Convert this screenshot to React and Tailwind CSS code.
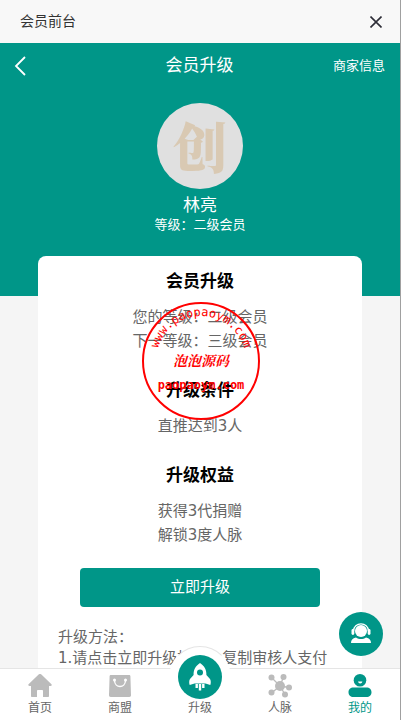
import React from "react";

const HomeIcon = () => (
  <svg viewBox="0 0 24 24" className="w-6 h-6" fill="currentColor">
    <path d="M10.6.6a2 2 0 0 1 2.8 0L23.200 10c1 1 .6 2-.6 2H21v9.900c0 .7-.4 1.100-1.100 1.100H15v-6.200c0-.5-.3-.8-.8-.8H9.800c-.5 0-.8.3-.8.8V23H4.100C3.400 23 3 22.600 3 21.900V12H1.400C.2 12-.2 11 .8 10z" />
  </svg>
);

const BagIcon = () => (
  <svg viewBox="0 0 24 24" className="w-6 h-6">
    <path d="M3 1h18c.9 0 1.300.5 1.400 1.400l.6 18.900c0 1.100-.6 1.700-1.700 1.700H2.700C1.600 23 1 22.400 1 21.300l.6-18.900C1.700 1.500 2.100 1 3 1z" fill="currentColor" />
    <path d="M6.500 6.500c.3 8 10.700 8 11 0" fill="none" stroke="#fff" strokeWidth="1.300" />
    <circle cx="6.500" cy="6" r="1.500" fill="#fff" />
    <circle cx="17.500" cy="6" r="1.500" fill="#fff" />
  </svg>
);

const NetworkIcon = () => (
  <svg viewBox="0 0 24 24" className="w-6 h-6" fill="currentColor" stroke="currentColor">
    <path d="M3.500 3.500 12 12M15.500 3 12 12M21 13.500 12 12M3.500 19 12 12M17 20.500 12 12" strokeWidth="1.300" />
    <g stroke="none">
      <circle cx="12" cy="12" r="5" />
      <circle cx="3.500" cy="3.500" r="3" />
      <circle cx="15.500" cy="3" r="3" />
      <circle cx="21" cy="13.500" r="3" />
      <circle cx="3.500" cy="18.500" r="3" />
      <circle cx="17" cy="20.500" r="3" />
    </g>
  </svg>
);

const UserIcon = () => (
  <svg viewBox="0 0 24 24" className="w-6 h-6" fill="currentColor">
    <circle cx="12" cy="6.300" r="6.300" />
    <path d="M5.500 13.500h13c3 0 5 2 5 4.700s-2 4.800-5 4.800h-13c-3 0-5-2.100-5-4.800s2-4.700 5-4.700z" />
    <path d="M10 7.500h4.400c-.4 2.600-4 2.600-4.400 0z" fill="#fff" />
  </svg>
);

const RocketIcon = () => (
  <svg viewBox="0 0 24 30" className="w-6 h-[30px]" fill="#fff">
    <path d="M12 1c4.600 3 6.600 7 6.400 12l3.600 4c1 1.200 1 4.500.3 6L17.500 21.500h-11L1.700 23c-.7-1.500-.7-4.800.3-6l3.600-4C5.400 8 7.400 4 12 1z" />
    <path d="M7.500 22h2.400v4H7.500zM10.800 22h2.400v6.500h-2.400zM14.100 22h2.400v4h-2.400z" />
    <circle cx="12" cy="10.500" r="3" fill="#009688" />
  </svg>
);

const ServiceIcon = () => (
  <svg viewBox="0 0 24 24" className="w-6 h-6" fill="#fff">
    <path d="M4.500 9C4.500-.5 19.500-.5 19.500 9" fill="none" stroke="#fff" strokeWidth="1.300" />
    <circle cx="12" cy="9" r="6" />
    <rect x="2.500" y="7" width="2.800" height="6" rx="1.400" />
    <rect x="18.700" y="7" width="2.800" height="6" rx="1.400" />
    <path d="M2 21c0-3 1.500-4.800 5-5.500 3 2 7 2 10 0 3.500.7 5 2.500 5 5.500z" />
  </svg>
);

const Stamp = () => (
  <svg
    viewBox="0 0 122 120"
    className="pointer-events-none absolute top-[45px] left-1/2 w-[122px] h-[120px] -translate-x-1/2"
    fill="#f00"
  >
    <defs>
      <path id="stamp-arc" d="M17 60a45 45 0 0 1 90 0" />
    </defs>
    <circle cx="62" cy="60" r="58" fill="none" stroke="#f00" strokeWidth="2" />
    <text className="font-['DejaVu_Sans_Mono',monospace] text-[12px]">
      <textPath href="#stamp-arc" startOffset="50%" textAnchor="middle">
        www.paopaoym.com
      </textPath>
    </text>
    <text x="62" y="65" textAnchor="middle" className="font-['Noto_Serif_CJK_SC','Noto_Sans_CJK_SC',serif] text-[14px] font-bold italic">
      泡泡源码
    </text>
    <text x="62" y="88" textAnchor="middle" className="font-['DejaVu_Sans_Mono',monospace] text-[12px] font-bold">
      paopaoym.com
    </text>
  </svg>
);

const sections = [
  { title: "会员升级", lines: ["您的等级：二级会员", "下一等级：三级会员"] },
  { title: "升级条件", lines: ["直推达到3人"] },
  { title: "升级权益", lines: ["获得3代捐赠", "解锁3度人脉"] },
];

const tabs = [
  { label: "首页", icon: <HomeIcon /> },
  { label: "商盟", icon: <BagIcon /> },
  { label: "升级", raised: true },
  { label: "人脉", icon: <NetworkIcon /> },
  { label: "我的", icon: <UserIcon />, active: true },
];

const App = () => {
  return (
    <div className="flex h-screen flex-col overflow-hidden border-r border-[#a0a0a0] bg-[#f5f5f5] font-['DejaVu_Sans','Noto_Sans_CJK_SC',sans-serif]">
      <div className="flex h-[43px] shrink-0 items-center justify-between bg-[#f8f8f8] pl-5 pr-[18px]">
        <span className="text-[14px] text-[#333]">会员前台</span>
        <button type="button" aria-label="关闭" className="text-[#2d2d37]">
          <svg viewBox="0 0 12 12" className="w-3 h-3" fill="none" stroke="currentColor" strokeWidth="1.600">
            <path d="M.5.5l11 11M11.500.5l-11 11" />
          </svg>
        </button>
      </div>

      <main className="min-h-0 flex-1 overflow-hidden">
        <header className="bg-[#009688] pb-[63px] text-white">
          <div className="grid h-[46px] grid-cols-3 items-center pl-3.5 pr-[15px]">
            <button type="button" aria-label="返回" className="justify-self-start">
              <svg viewBox="0 0 12 20" className="w-3 h-5" fill="none" stroke="currentColor" strokeWidth="1.800">
                <path d="M11 1L2 10l9 9" />
              </svg>
            </button>
            <h1 className="text-center text-[17px]">会员升级</h1>
            <a href="#merchant" className="justify-self-end text-[13px]">商家信息</a>
          </div>

          <div className="mt-3.5 flex flex-col items-center">
            <div className="flex h-[86px] w-[86px] items-center justify-center rounded-full bg-[#e0e0e0] font-['Noto_Serif_CJK_SC','Noto_Sans_CJK_SC',serif] text-[54px] font-black leading-none text-[#d9c9b3]">
              创
            </div>
            <p className="mt-1 text-[17px] leading-6">林亮</p>
            <p className="text-[13px] leading-4">等级：二级会员</p>
          </div>
        </header>

        <div className="relative mx-[38px] -mt-10 rounded-lg bg-white px-5 pt-3 pb-10 text-[15px] text-[#666]">
          <div className="flex flex-col gap-6 text-center">
            {sections.map((s) => (
              <section key={s.title}>
                <h2 className="mb-[11px] text-[17px] font-bold leading-[26px] text-black">{s.title}</h2>
                {s.lines.map((line) => (
                  <p key={line} className="leading-6">{line}</p>
                ))}
              </section>
            ))}
          </div>

          <div className="mt-[21px] px-[22px]">
            <button type="button" className="h-[39px] w-full rounded bg-[#009688] text-white">
              立即升级
            </button>
          </div>

          <div className="mt-5 leading-[21px]">
            <p>升级方法：</p>
            <p>1.请点击立即升级按钮，复制审核人支付</p>
          </div>

          <Stamp />
        </div>
      </main>

      <button
        type="button"
        aria-label="客服"
        className="fixed right-[18px] bottom-16 flex h-11 w-11 items-center justify-center rounded-full bg-[#009688]"
      >
        <ServiceIcon />
      </button>

      <nav className="relative grid shrink-0 grid-cols-5 border-t border-[#e5e5e5] bg-white">
        {tabs.map((tab) => (
          <a
            key={tab.label}
            href={`#${tab.label}`}
            className={`relative flex flex-col items-center pt-[5px] pb-1 ${tab.active ? "text-[#009688]" : "text-[#bbb]"}`}
          >
            {tab.raised ? (
              <>
                <span className="absolute -top-[23px] flex h-[62px] w-[62px] items-center justify-center rounded-full border border-transparent border-t-[#e5e5e5] bg-white">
                  <span className="flex h-11 w-11 items-center justify-center rounded-full bg-[#009688]">
                    <RocketIcon />
                  </span>
                </span>
                <span className="h-6" />
              </>
            ) : (
              tab.icon
            )}
            <span className={`relative mt-0.5 text-[12px] leading-4 ${tab.active ? "" : "text-[#666]"}`}>{tab.label}</span>
          </a>
        ))}
      </nav>
    </div>
  );
};

export default App;
